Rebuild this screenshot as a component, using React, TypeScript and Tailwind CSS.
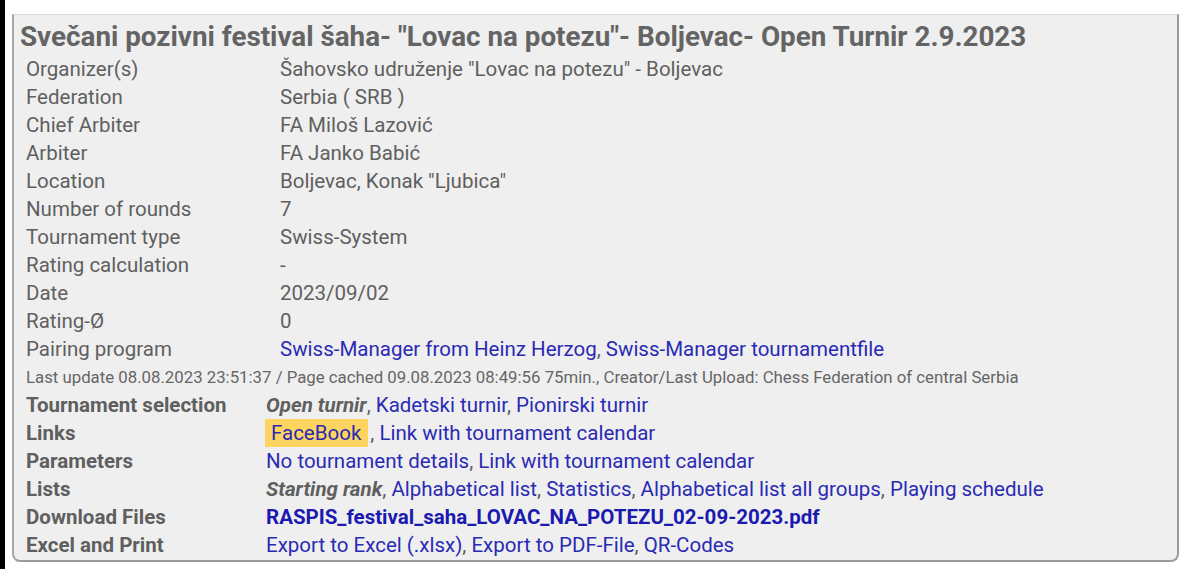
const info: [string, string][] = [
  ['Organizer(s)', 'Šahovsko udruženje "Lovac na potezu" - Boljevac'],
  ['Federation', 'Serbia ( SRB )'],
  ['Chief Arbiter', 'FA Miloš Lazović'],
  ['Arbiter', 'FA Janko Babić'],
  ['Location', 'Boljevac, Konak "Ljubica"'],
  ['Number of rounds', '7'],
  ['Tournament type', 'Swiss-System'],
  ['Rating calculation', '-'],
  ['Date', '2023/09/02'],
  ['Rating-Ø', '0'],
]

const link = 'text-[#2a2ab4]'

export default function App() {
  return (
    <div className="flex min-h-screen bg-white font-['Roboto',sans-serif]">
      {/* dark edge of the capture */}
      <div className="w-[5px] shrink-0 bg-black" />

      <div className="flex-1 pl-[7px] pr-[8px] pt-[14px] pb-[5px]">
        <div className="border-l-2 border-r-2 border-b-2 border-t border-l-[#a8a8a8] border-r-[#9a9a9a] border-b-[#9a9a9a] border-t-[#d6d6d6] bg-[#efefef] rounded-b-lg pl-[12px] pb-[1px]">
          {/* Title */}
          <h2 className="h-[40px] flex items-center pt-[3px] -ml-[6px] text-[27.8px] font-bold text-[#646464] leading-none whitespace-nowrap">
            Svečani pozivni festival šaha- "Lovac na potezu"- Boljevac- Open Turnir 2.9.2023
          </h2>

          {/* Info table */}
          <div className="text-[20.5px] text-[#5f5f5f]">
            {info.map(([label, value]) => (
              <div key={label} className="flex h-[28px] items-center">
                <div className="w-[254px] shrink-0">{label}</div>
                <div>{value}</div>
              </div>
            ))}
            <div className="flex h-[28px] items-center">
              <div className="w-[254px] shrink-0">Pairing program</div>
              <div>
                <span className={link}>Swiss-Manager from Heinz Herzog</span>,{' '}
                <span className={link}>Swiss-Manager tournamentfile</span>
              </div>
            </div>
          </div>

          {/* Last update */}
          <div className="h-[28px] flex items-center pt-[2px] text-[16.8px] text-[#666] whitespace-nowrap">
            Last update 08.08.2023 23:51:37 / Page cached 09.08.2023 08:49:56 75min., Creator/Last Upload: Chess Federation of central Serbia
          </div>

          {/* Selection table */}
          <div className="text-[20.5px] text-[#5f5f5f]">
            <div className="flex h-[28px] items-center">
              <div className="w-[240px] shrink-0 font-bold">Tournament selection</div>
              <div>
                <i className="font-bold">Open turnir</i>,{' '}
                <span className={link}>Kadetski turnir</span>,{' '}
                <span className={link}>Pionirski turnir</span>
              </div>
            </div>
            <div className="flex h-[28px] items-center">
              <div className="w-[240px] shrink-0 font-bold">Links</div>
              <div className="flex h-full items-center">
                <span className={`${link} bg-[#fdd45f] h-full flex items-center px-[6px] pr-[7px] -ml-[1px]`}>FaceBook</span>
                <span className="ml-[2px]">,&nbsp;</span>
                <span className={link}>Link with tournament calendar</span>
              </div>
            </div>
            <div className="flex h-[28px] items-center">
              <div className="w-[240px] shrink-0 font-bold">Parameters</div>
              <div>
                <span className={link}>No tournament details</span>,{' '}
                <span className={link}>Link with tournament calendar</span>
              </div>
            </div>
            <div className="flex h-[28px] items-center">
              <div className="w-[240px] shrink-0 font-bold">Lists</div>
              <div>
                <i className="font-bold">Starting rank</i>,{' '}
                <span className={link}>Alphabetical list</span>,{' '}
                <span className={link}>Statistics</span>,{' '}
                <span className={link}>Alphabetical list all groups</span>,{' '}
                <span className={link}>Playing schedule</span>
              </div>
            </div>
            <div className="flex h-[28px] items-center">
              <div className="w-[240px] shrink-0 font-bold">Download Files</div>
              <div className="font-bold text-[#1a1ab0]">RASPIS_festival_saha_LOVAC_NA_POTEZU_02-09-2023.pdf</div>
            </div>
            <div className="flex h-[28px] items-center">
              <div className="w-[240px] shrink-0 font-bold">Excel and Print</div>
              <div>
                <span className={link}>Export to Excel (.xlsx)</span>,{' '}
                <span className={link}>Export to PDF-File</span>,{' '}
                <span className={link}>QR-Codes</span>
              </div>
            </div>
          </div>
        </div>
      </div>
    </div>
  )
}
